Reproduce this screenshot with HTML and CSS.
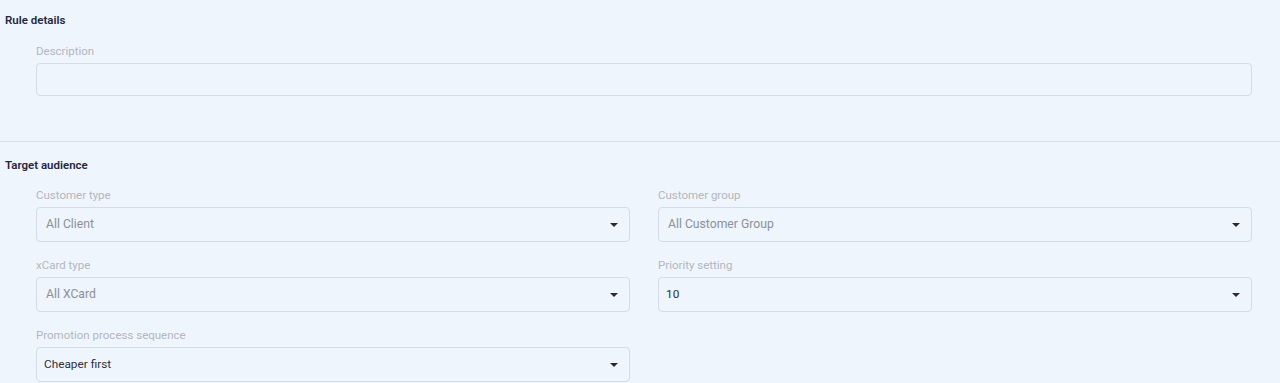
FILE: index.html
```html
<!DOCTYPE html>
<html lang="en">
<head>
  <meta charset="UTF-8" />
  <title>Rule form</title>
  <link rel="stylesheet" href="styles.css">
</head>
<body>
  <section class="block">
    <h3 class="block-title">Rule details</h3>
    <div class="fields">
      <div class="field full">
        <label>Description</label>
        <div class="input"></div>
      </div>
    </div>
  </section>

  <section class="block">
    <h3 class="block-title">Target audience</h3>
    <div class="fields grid">
      <div class="field">
        <label>Customer type</label>
        <div class="select placeholder"><span>All Client</span><i class="caret"></i></div>
      </div>
      <div class="field">
        <label>Customer group</label>
        <div class="select placeholder"><span>All Customer Group</span><i class="caret"></i></div>
      </div>
      <div class="field">
        <label>xCard type</label>
        <div class="select placeholder"><span>All XCard</span><i class="caret"></i></div>
      </div>
      <div class="field">
        <label>Priority setting</label>
        <div class="select"><span>10</span><i class="caret"></i></div>
      </div>
      <div class="field">
        <label>Promotion process sequence</label>
        <div class="select"><span>Cheaper first</span><i class="caret"></i></div>
      </div>
    </div>
  </section>
</body>
</html>
```

FILE: styles.css
```css
* {
  margin: 0;
  padding: 0;
  box-sizing: border-box;
}

body {
  background: #eef5fd;
  font-family: Roboto, "Liberation Sans", sans-serif;
  font-size: 12px;
  color: #2f3142;
  overflow: hidden;
}

.block {
  padding: 12px 0 0;
}

.block + .block {
  border-top: 1px solid #d8dfe7;
  margin-top: 45px;
  padding-top: 15px;
}

.block-title {
  padding-left: 5px;
  font-size: 11.5px;
  line-height: 16px;
  font-weight: 600;
  color: #262840;
}

.fields {
  padding: 15px 28px 0 36px;
}

.grid {
  display: grid;
  grid-template-columns: 1fr 1fr;
  column-gap: 28px;
  row-gap: 15px;
  padding-top: 14px;
}

.field label {
  display: block;
  font-size: 11.5px;
  line-height: 14px;
  padding-top: 1px;
  color: #b3b7be;
  margin-bottom: 5px;
}

.input {
  height: 33px;
  border: 1px solid #d5dce5;
  border-radius: 4px;
}

.select {
  height: 35px;
  border: 1px solid #d5dce5;
  border-radius: 4px;
  display: flex;
  align-items: center;
  justify-content: space-between;
  padding: 0 11px 1px 7px;
  font-size: 11.8px;
  color: #2f3142;
}

.select.placeholder {
  padding-left: 9px;
  font-size: 12.2px;
  color: #8c9097;
}

.caret {
  width: 0;
  height: 0;
  border-left: 4px solid transparent;
  border-right: 4px solid transparent;
  border-top: 4px solid #2a2a2a;
  margin-top: 2px;
}
```
